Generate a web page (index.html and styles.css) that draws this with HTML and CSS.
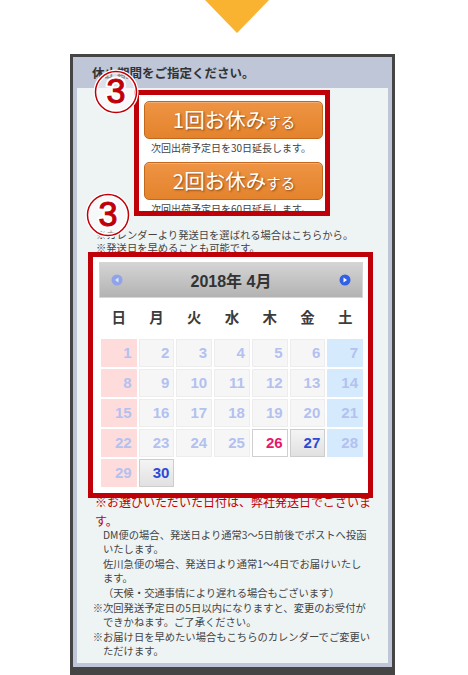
FILE: index.html
```html
<!DOCTYPE html>
<html lang="ja">
<head>
<meta charset="utf-8">
<title>休止期間</title>
<link rel="stylesheet" href="styles.css">
</head>
<body>
<div class="arrow-row">
  <svg class="arrow" width="64" height="33" viewBox="0 0 64 33"><polygon points="0,0 64,0 32,33" fill="#fab231"/></svg>
</div>
<div class="frame">
  <h2 class="frame-title">休止期間をご指定ください。</h2>
  <div class="frame-body">
    <div class="skip-box">
      <button class="skip-btn"><span class="big">1回お休み</span><span class="small">する</span></button>
      <p class="skip-note">次回出荷予定日を30日延長します。</p>
      <button class="skip-btn second"><span class="big">2回お休み</span><span class="small">する</span></button>
      <p class="skip-note">次回出荷予定日を60日延長します。</p>
    </div>
    <p class="cal-lead">※カレンダーより発送日を選ばれる場合はこちらから。<br>※発送日を早めることも可能です。</p>
    <div class="calendar">
      <div class="cal-head">
        <svg class="nav" width="12" height="12" viewBox="0 0 12 12"><circle cx="6" cy="6" r="5.5" fill="#8fa3e8"/><polygon points="7.5,3.5 7.5,8.5 4,6" fill="#dfe6fb"/></svg>
        <span class="cal-title">2018年 4月</span>
        <svg class="nav" width="12" height="12" viewBox="0 0 12 12"><circle cx="6" cy="6" r="5.5" fill="#2f60e6"/><polygon points="4.5,3.5 4.5,8.5 8,6" fill="#ffffff"/></svg>
      </div>
      <div class="cal-weekdays">
        <span>日</span><span>月</span><span>火</span><span>水</span><span>木</span><span>金</span><span>土</span>
      </div>
      <div class="cal-grid">
        <span class="day sun">1</span><span class="day off">2</span><span class="day off">3</span><span class="day off">4</span><span class="day off">5</span><span class="day off">6</span><span class="day sat">7</span>
        <span class="day sun">8</span><span class="day off">9</span><span class="day off">10</span><span class="day off">11</span><span class="day off">12</span><span class="day off">13</span><span class="day sat">14</span>
        <span class="day sun">15</span><span class="day off">16</span><span class="day off">17</span><span class="day off">18</span><span class="day off">19</span><span class="day off">20</span><span class="day sat">21</span>
        <span class="day sun">22</span><span class="day off">23</span><span class="day off">24</span><span class="day off">25</span><span class="day today">26</span><span class="day pick">27</span><span class="day sat">28</span>
        <span class="day sun">29</span><span class="day pick">30</span>
      </div>
    </div>
    <p class="notice">※お選びいただいた日付は、弊社発送日でございま<br>す。</p>
    <div class="notes">
      <p class="plain">DM便の場合、発送日より通常3～5日前後でポストへ投函<br>いたします。<br>佐川急便の場合、発送日より通常1～4日でお届けいたし<br>ます。<br>（天候・交通事情により遅れる場合もございます）</p>
      <p class="mark">※次回発送予定日の5日以内になりますと、変更のお受付が<br>できかねます。ご了承ください。</p>
      <p class="mark">※お届け日を早めたい場合もこちらのカレンダーでご変更い<br>ただけます。</p>
    </div>
  </div>
  <div class="hl hl-buttons"></div>
  <div class="hl hl-calendar"></div>
  <svg class="step step-one" width="46" height="46" viewBox="0 0 46 46"><circle cx="23" cy="23" r="20.5" fill="rgba(255,255,255,0.45)" stroke="#fff" stroke-width="4"/><circle cx="23" cy="23" r="20.5" fill="none" stroke="#c00008" stroke-width="1.5"/><text x="23" y="34" text-anchor="middle" textLength="19" lengthAdjust="spacingAndGlyphs" class="step-halo">3</text><text x="23" y="34" text-anchor="middle" textLength="19" lengthAdjust="spacingAndGlyphs" class="step-num">3</text></svg>
  <svg class="step step-two" width="46" height="46" viewBox="0 0 46 46"><circle cx="23" cy="23" r="20.5" fill="rgba(255,255,255,0.45)" stroke="#fff" stroke-width="4"/><circle cx="23" cy="23" r="20.5" fill="none" stroke="#c00008" stroke-width="1.5"/><text x="23" y="34" text-anchor="middle" textLength="19" lengthAdjust="spacingAndGlyphs" class="step-halo">3</text><text x="23" y="34" text-anchor="middle" textLength="19" lengthAdjust="spacingAndGlyphs" class="step-num">3</text></svg>
</div>
</body>
</html>
```
FILE: styles.css
```css
html, body {
  margin: 0;
  padding: 0;
  background: #ffffff;
}
body {
  width: 468px;
  height: 675px;
  overflow: hidden;
  font-family: "Noto Sans CJK JP", sans-serif;
  color: #444;
}
p { margin: 0; }

.arrow-row {
  display: flex;
  height: 33px;
  padding-left: 205px;
}
.arrow { display: block; }

.frame {
  position: relative;
  margin: 21px 0 0 70px;
  width: 325px;
  box-sizing: border-box;
  border: 3px solid #454545;
  border-bottom-width: 8px;
  padding: 0 4px 4px;
  background: #bec6d8;
}
.frame-title {
  margin: 0;
  height: 31px;
  line-height: 31px;
  padding-left: 15px;
  font-size: 12.5px;
  font-weight: 700;
  color: #333;
}
.frame-body {
  background: #eef3f4;
  padding: 7px 0 4px;
}

.skip-box {
  width: 186px;
  height: 116px;
  box-sizing: border-box;
  margin-left: 62px;
  padding: 6px 0 0 5px;
  background: #ffffff;
}
.skip-btn {
  display: flex;
  align-items: baseline;
  justify-content: center;
  width: 179px;
  height: 38px;
  box-sizing: border-box;
  padding: 0 0 0 1px;
  border: 1px solid #c4681d;
  border-radius: 5px;
  background: linear-gradient(#ee9444, #e4832c);
  box-shadow: inset 0 1px 0 rgba(255,255,255,0.25);
  color: #fff;
  font-family: "Noto Sans CJK JP", sans-serif;
  line-height: 35px;
  text-shadow: 1px 1px 2px rgba(80,30,0,0.6);
  cursor: pointer;
}
.skip-btn .big { font-size: 20.5px; }
.skip-btn .small { font-size: 14.5px; }
.skip-btn.second { margin-top: 7px; }
.skip-note {
  margin-top: 2px;
  padding-left: 7px;
  font-size: 10px;
  line-height: 14px;
  color: #444;
}

.cal-lead {
  margin-top: 17px;
  padding-left: 19px;
  font-size: 10.3px;
  line-height: 13px;
  color: #444;
}

.calendar {
  margin: 3px 0 0 16px;
  width: 275px;
  box-sizing: border-box;
  padding: 5px 5px 6px 6px;
  background: #fff;
  border-bottom: 1px solid #d9d9d9;
}
.cal-head {
  display: flex;
  align-items: center;
  justify-content: space-between;
  height: 36px;
  box-sizing: border-box;
  padding: 0 11px 0 11px;
  border: 1px solid #d6d6d6;
  background: linear-gradient(#d4d4d4, #b3b3b3);
}
.nav { display: block; }
.cal-title {
  font-family: "Liberation Sans", "Noto Sans CJK JP", sans-serif;
  font-size: 16px;
  font-weight: 700;
  color: #333;
}
.cal-weekdays {
  display: grid;
  grid-template-columns: repeat(7, 1fr);
  column-gap: 2px;
  margin-left: 2px;
  height: 41px;
  line-height: 38px;
  text-align: center;
  font-size: 14.5px;
  font-weight: 700;
  color: #3c3c3c;
}
.cal-grid {
  display: grid;
  grid-template-columns: repeat(7, 1fr);
  grid-auto-rows: 28px;
  gap: 2px;
  margin-left: 2px;
}
.day {
  box-sizing: border-box;
  border: 1px solid transparent;
  padding-right: 4px;
  text-align: right;
  font-family: "Liberation Sans", sans-serif;
  font-size: 15px;
  font-weight: 700;
  line-height: 26px;
  color: #b3c1f1;
}
.day.off { background: #f6f6f6; border-color: #ededed; }
.day.sun { background: #ffdcdc; border-color: #ffdcdc; }
.day.sat { background: #d5eafc; border-color: #d5eafc; }
.day.today { background: #fff; border-color: #cfcfcf; color: #e5186c; }
.day.pick { background: linear-gradient(#f4f4f4, #e1e1e1); border-color: #cdcdcd; color: #2c49d6; }

.notice {
  margin-top: -2px;
  padding-left: 18px;
  font-size: 12px;
  line-height: 19px;
  color: #c00000;
}
.notes {
  margin-top: -2.3px;
  font-size: 10.3px;
  line-height: 14.6px;
  color: #444;
}
.notes .plain { padding-left: 26px; }
.notes .mark { padding-left: 26px; text-indent: -1em; }

.hl {
  position: absolute;
  box-sizing: border-box;
  border: 5px solid #c00008;
  pointer-events: none;
}
.hl-buttons { left: 61px; top: 33px; width: 196px; height: 126px; }
.hl-calendar { left: 15px; top: 195px; width: 285px; height: 246px; }

.step { position: absolute; }
.step-one { left: 20px; top: 12px; }
.step-two { left: 12px; top: 135px; }
.step-halo {
  font-family: "Liberation Sans", sans-serif;
  font-size: 35px;
  fill: #fff;
  stroke: #fff;
  stroke-width: 5px;
}
.step-num {
  font-family: "Liberation Sans", sans-serif;
  font-size: 35px;
  fill: #c00008;
  stroke: #c00008;
  stroke-width: 1.1px;
}
```
